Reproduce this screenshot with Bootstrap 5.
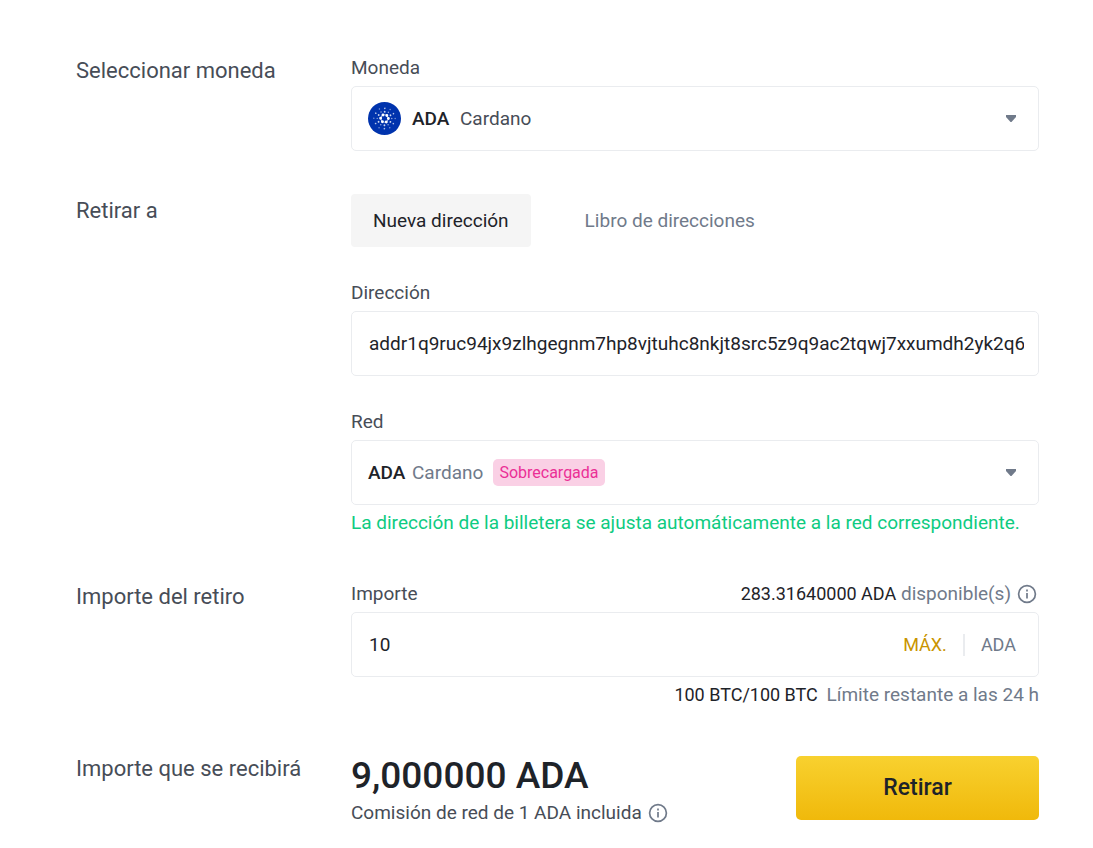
<!DOCTYPE html>
<html lang="es">
<head>
<meta charset="utf-8">
<meta name="viewport" content="width=device-width, initial-scale=1">
<title>Retirar criptomonedas</title>
<link href="https://cdn.jsdelivr.net/npm/bootstrap@5.3.0/dist/css/bootstrap.min.css" rel="stylesheet">
<style>
:root{--ink:#1e2329;--slate:#474d57;--muted:#707a8a;--line:#eaecef;--gold:#c99400;--green:#0ecb81}
body{font-family:Roboto,"Liberation Sans",sans-serif;font-size:19px;line-height:28px;color:var(--slate)}
.withdraw{padding:54px 54px 20px 76px}
.sections{gap:43px}
.side-title{font-size:22px;line-height:34px;font-weight:400;width:275px}
.ink{color:var(--ink)}
.soft{color:var(--muted)}
.figure-text{font-size:18px}
.field{border:1px solid var(--line);border-radius:5px;min-height:65px;background:#fff}
.field:focus-within{border-color:#f0b90b}
.field .form-control,.field .form-select{border:0;background-color:transparent;box-shadow:none;font-size:19px;line-height:28px;color:var(--ink);padding:0 14px 0 17px}
.picker{display:grid;align-items:stretch}
.picker>*{grid-area:1/1}
.picker .face{pointer-events:none;padding-left:16px}
.picker .form-select{background-image:none}
.picker .coin-select{padding-left:108px;color:var(--slate)}
.picker .net-select{padding-left:60px;color:var(--muted)}
.coin-code{margin-left:11px}
.net-tag{background:#fad0e5;color:#eb2f96;font-size:16px;line-height:27px;padding:0 6px;border-radius:5px;margin-left:88px}
.caret{width:10px;height:8px;margin-right:22px}
.tab-btn{font-size:19px;line-height:28px;padding:12px 22px;border-radius:4px;height:53px;border:0;color:var(--muted)}
.tab-btn.active{background:#f5f5f5;color:var(--ink)}
.tab-gap{gap:32px}
.bare{border:0;background:none;padding:0;line-height:28px}
.max-btn{color:var(--gold)}
.rule{width:2px;height:22px;background:var(--line)}
.unit{padding-right:22px}
.green-note{color:var(--green)}
.info-btn{margin:0 2px 0 6px}
.info{width:20px;height:20px;display:block}
.total{font-size:37px;line-height:47px;font-weight:500;color:var(--ink)}
.go{width:243px;height:64px;border:0;border-radius:5px;font-size:23px;font-weight:500;color:var(--ink);background:linear-gradient(#f8d12f,#f0b90b)}
</style>
</head>
<body>
<main class="withdraw">
<form class="sections d-flex flex-column">
  <section class="d-lg-flex">
    <h2 class="side-title mb-0 flex-shrink-0">Seleccionar moneda</h2>
    <div class="flex-grow-1">
      <label class="d-block mb-1" for="coin">Moneda</label>
      <div class="field picker">
        <select class="form-select coin-select" id="coin"><option>Cardano</option></select>
        <div class="face d-flex align-items-center">
          <svg width="33" height="33" viewBox="-17 -17 34 34" aria-hidden="true">
            <circle r="17" fill="#0033ad"/>
            <g fill="none" stroke="#fff" stroke-linecap="round">
              <circle r="3.800" stroke-width="1" opacity=".6"/>
              <circle r="4" stroke-width="3" stroke-dasharray="0 4.189"/>
              <circle r="7" stroke-width="1.900" stroke-dasharray="0 7.330" opacity=".8" transform="rotate(30)"/>
              <circle r="7.500" stroke-width="1.500" stroke-dasharray="0 7.854" opacity=".6"/>
              <circle r="10.500" stroke-width="1.700" stroke-dasharray="0 10.996" opacity=".7" transform="rotate(30)"/>
              <circle r="11" stroke-width="1.500" stroke-dasharray="0 11.519" opacity=".5"/>
            </g>
          </svg>
          <span class="ink fw-medium coin-code">ADA</span>
          <svg class="caret ms-auto" viewBox="0 0 10 8" aria-hidden="true"><path d="M0 0h10v2L5.500 7h-1L0 2z" fill="#707a8a"/></svg>
        </div>
      </div>
    </div>
  </section>

  <section class="d-lg-flex">
    <h2 class="side-title mb-0 flex-shrink-0">Retirar a</h2>
    <div class="flex-grow-1 d-flex flex-column gap-4">
      <div class="d-flex flex-wrap tab-gap mb-2">
        <button type="button" class="btn tab-btn active">Nueva dirección</button>
        <button type="button" class="btn tab-btn">Libro de direcciones</button>
      </div>
      <div class="mb-2">
        <label class="d-block mb-1" for="address">Dirección</label>
        <div class="field d-flex align-items-center">
          <input class="form-control" id="address" type="text" value="addr1q9ruc94jx9zlhgegnm7hp8vjtuhc8nkjt8src5z9q9ac2tqwj7xxumdh2yk2q6">
        </div>
      </div>
      <div>
        <label class="d-block mb-1" for="network">Red</label>
        <div class="field picker">
          <select class="form-select net-select" id="network"><option>Cardano</option></select>
          <div class="face d-flex align-items-center">
            <span class="ink fw-medium">ADA</span>
            <span class="net-tag">Sobrecargada</span>
            <svg class="caret ms-auto" viewBox="0 0 10 8" aria-hidden="true"><path d="M0 0h10v2L5.500 7h-1L0 2z" fill="#707a8a"/></svg>
          </div>
        </div>
        <p class="green-note mt-1 mb-0">La dirección de la billetera se ajusta automáticamente a la red correspondiente.</p>
      </div>
    </div>
  </section>

  <section class="d-lg-flex">
    <h2 class="side-title mb-0 flex-shrink-0">Importe del retiro</h2>
    <div class="flex-grow-1">
      <div class="d-flex flex-wrap justify-content-between mb-1">
        <label for="amount">Importe</label>
        <div class="d-flex align-items-center soft">
          <span><span class="ink figure-text">283.31640000 ADA</span> disponible(s)</span>
          <button type="button" class="bare soft info-btn" aria-label="Información del saldo">
            <svg class="info" viewBox="0 0 20 20" fill="none" stroke="currentColor" stroke-width="1.700"><circle cx="10" cy="10" r="8.400"/><path d="M10 9v5.500M10 5.500v2"/></svg>
          </button>
        </div>
      </div>
      <div class="field d-flex align-items-center">
        <input class="form-control flex-grow-1" id="amount" type="text" inputmode="decimal" value="10">
        <button type="button" class="bare max-btn figure-text">MÁX.</button>
        <span class="rule mx-3 flex-shrink-0"></span>
        <span class="soft figure-text unit">ADA</span>
      </div>
      <p class="text-end soft mt-1 mb-0"><span class="ink figure-text me-1">100 BTC/100 BTC</span> Límite restante a las 24 h</p>
    </div>
  </section>

  <section class="d-lg-flex">
    <h2 class="side-title mb-0 flex-shrink-0">Importe que se recibirá</h2>
    <div class="flex-grow-1 d-flex flex-wrap justify-content-between align-items-start">
      <div>
        <div class="total">9,000000 ADA</div>
        <div class="d-flex align-items-center">Comisión de red de 1 ADA incluida
          <button type="button" class="bare soft info-btn" aria-label="Información de la comisión">
            <svg class="info" viewBox="0 0 20 20" fill="none" stroke="currentColor" stroke-width="1.700"><circle cx="10" cy="10" r="8.400"/><path d="M10 9v5.500M10 5.500v2"/></svg>
          </button>
        </div>
      </div>
      <button type="submit" class="btn go mt-1">Retirar</button>
    </div>
  </section>
</form>
</main>
<script src="https://cdn.jsdelivr.net/npm/bootstrap@5.3.0/dist/js/bootstrap.bundle.min.js"></script>
</body>
</html>
